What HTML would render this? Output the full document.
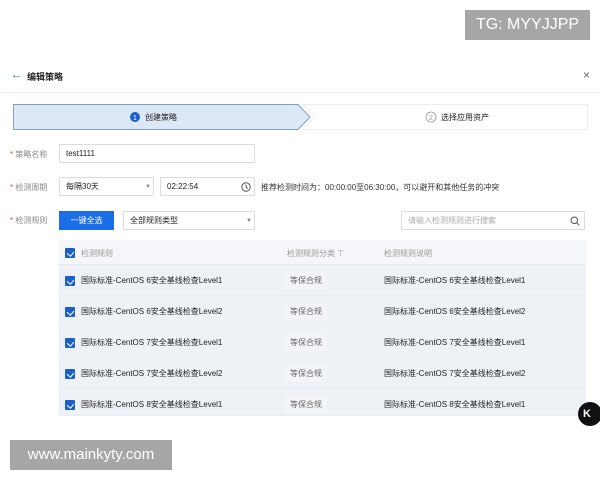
<!DOCTYPE html>
<html><head><meta charset="utf-8"><style>
*{box-sizing:border-box;margin:0;padding:0}
body{width:600px;height:480px;background:#fff;font-family:"Liberation Sans","Noto Sans CJK SC",sans-serif;position:relative;overflow:hidden;color:#222}
.a{position:absolute}
.f8{font-size:8px}
.lbl{font-size:8px;color:#888}
.lbl b{color:#e54545;font-weight:normal}
.inp{border:1px solid #dcdcdc;background:#fff;font-size:8px;display:flex;align-items:center;padding-left:6px}
.cb{width:10px;height:10px;background:#1b5fc9;border-radius:1px}
.cb:after{content:"";position:absolute;left:2.5px;top:1.5px;width:4px;height:5px;border:solid #fff;border-width:0 1.5px 1.5px 0;transform:rotate(40deg)}
.row{position:absolute;left:59px;width:527px;height:31px;background:#eef1f6;font-size:8px;border-bottom:1px solid #e9ecf2}
.row span{position:absolute;top:10px}
.tag{position:absolute;top:7px;left:226px;background:#f3f4f7;padding:3px 5px;color:#666}
</style></head><body>
<div class="a" style="left:465px;top:10px;width:125px;height:30px;background:#a6a6a6;color:#fff;font-size:16px;line-height:30px;text-align:center">TG: MYYJJPP</div>

<div class="a" style="left:11px;top:69px;font-size:11px;color:#1b5fc9">←</div>
<div class="a" style="left:27px;top:70px;font-size:9px;font-weight:bold">编辑策略</div>
<div class="a" style="left:583px;top:68px;font-size:12px;color:#666">×</div>
<div class="a" style="left:0;top:92px;width:600px;height:1px;background:#eee"></div>

<svg class="a" style="left:13px;top:104px" width="575" height="26">
<path d="M0.5 0.5H285L297 13L285 25.5H0.5Z" fill="#dde8f7" stroke="#7f9fcf"/>
<path d="M290 0.5H574.5V25.5H290L302 13Z" fill="#fff" stroke="#eee"/>
<circle cx="122" cy="13" r="5" fill="#1b5fc9"/>
<text x="122" y="16" font-size="7" fill="#fff" text-anchor="middle" font-family="Liberation Sans">1</text>
<text x="132" y="16" font-size="8" fill="#222" font-family="Liberation Sans,Noto Sans CJK SC">创建策略</text>
<circle cx="418" cy="13" r="5" fill="none" stroke="#999" stroke-width="0.8"/>
<text x="418" y="16" font-size="7" fill="#999" text-anchor="middle" font-family="Liberation Sans">2</text>
<text x="428" y="16" font-size="8" fill="#222" font-family="Liberation Sans,Noto Sans CJK SC">选择应用资产</text>
</svg>

<div class="a lbl" style="left:10px;top:149px"><b>*</b> 策略名称</div>
<div class="a inp" style="left:59px;top:144px;width:196px;height:19px">test1111</div>

<div class="a lbl" style="left:10px;top:182px"><b>*</b> 检测周期</div>
<div class="a inp" style="left:59px;top:177px;width:95px;height:19px">每隔30天<span style="position:absolute;left:85px;color:#888;font-size:6px">▼</span></div>
<div class="a inp" style="left:160px;top:177px;width:95px;height:19px">02:22:54
<svg style="position:absolute;left:80px;top:4px" width="10" height="10"><circle cx="5" cy="5" r="4.2" fill="none" stroke="#555"/><path d="M5 2.5V5L6.8 6.5" fill="none" stroke="#555"/></svg></div>
<div class="a f8" style="left:261px;top:182px;color:#333">推荐检测时间为：00:00:00至06:30:00，可以避开和其他任务的冲突</div>

<div class="a lbl" style="left:10px;top:215px"><b>*</b> 检测规则</div>
<div class="a" style="left:59px;top:211px;width:55px;height:19px;background:#1b6ee8;color:#fff;font-size:8px;line-height:19px;text-align:center">一键全选</div>
<div class="a inp" style="left:123px;top:211px;width:132px;height:19px">全部规则类型<span style="position:absolute;left:122px;color:#888;font-size:6px">▼</span></div>
<div class="a inp" style="left:401px;top:211px;width:184px;height:19px;color:#aaa">请输入检测规则进行搜索
<svg style="position:absolute;left:168px;top:4px" width="10" height="10"><circle cx="4.3" cy="4.3" r="3.3" fill="none" stroke="#555"/><path d="M6.8 6.8L9.3 9.3" stroke="#555"/></svg></div>

<div class="a" style="left:59px;top:240px;width:527px;height:25px;background:#f4f6f9;border-bottom:1px solid #e3e6ec;font-size:8px;color:#999">
<div class="cb a" style="left:6px;top:8px"></div>
<span class="a" style="left:22px;top:8px">检测规则</span>
<span class="a" style="left:228px;top:8px">检测规则分类 ⊤</span>
<span class="a" style="left:325px;top:8px">检测规则说明</span>
</div>

<div class="row" style="top:265px"><div class="cb a" style="left:6px;top:11px"></div><span style="left:22px">国际标准-CentOS 6安全基线检查Level1</span><div class="tag">等保合规</div><span style="left:325px">国际标准-CentOS 6安全基线检查Level1</span></div>
<div class="row" style="top:296px"><div class="cb a" style="left:6px;top:11px"></div><span style="left:22px">国际标准-CentOS 6安全基线检查Level2</span><div class="tag">等保合规</div><span style="left:325px">国际标准-CentOS 6安全基线检查Level2</span></div>
<div class="row" style="top:327px"><div class="cb a" style="left:6px;top:11px"></div><span style="left:22px">国际标准-CentOS 7安全基线检查Level1</span><div class="tag">等保合规</div><span style="left:325px">国际标准-CentOS 7安全基线检查Level1</span></div>
<div class="row" style="top:358px"><div class="cb a" style="left:6px;top:11px"></div><span style="left:22px">国际标准-CentOS 7安全基线检查Level2</span><div class="tag">等保合规</div><span style="left:325px">国际标准-CentOS 7安全基线检查Level2</span></div>
<div class="row" style="top:389px;height:27px"><div class="cb a" style="left:6px;top:11px"></div><span style="left:22px">国际标准-CentOS 8安全基线检查Level1</span><div class="tag">等保合规</div><span style="left:325px">国际标准-CentOS 8安全基线检查Level1</span></div>

<div class="a" style="left:578px;top:402px;width:24px;height:24px;border-radius:50%;background:#111;color:#fff;font-size:11px;font-weight:bold;line-height:24px;padding-left:5px">K</div>
<div class="a" style="left:10px;top:440px;width:162px;height:30px;background:#a6a6a6;color:#fff;font-size:15px;line-height:30px;text-align:center">www.mainkyty.com</div>
</body></html>
